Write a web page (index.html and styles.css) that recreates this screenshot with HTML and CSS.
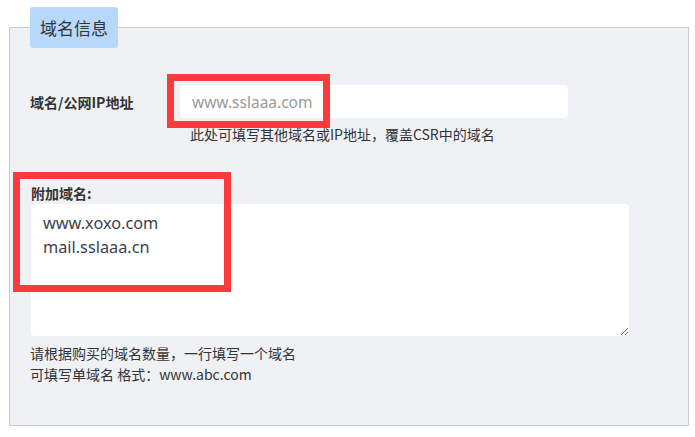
FILE: index.html
```html
<!DOCTYPE html>
<html lang="zh-CN">
<head>
<meta charset="utf-8">
<title>域名信息</title>
<link rel="stylesheet" href="styles.css">
</head>
<body>
<fieldset class="panel">
  <legend class="panel-title">域名信息</legend>
  <div class="panel-body">
    <div class="row">
      <label class="label" for="domain">域名/公网IP地址</label>
      <input class="input" id="domain" type="text" placeholder="www.sslaaa.com">
    </div>
    <div class="hint hint-indent">此处可填写其他域名或IP地址，覆盖CSR中的域名</div>
    <label class="label label-block" for="extra">附加域名:</label>
    <textarea class="textarea" id="extra">www.xoxo.com
mail.sslaaa.cn</textarea>
    <div class="hint hint-list">
      <div>请根据购买的域名数量，一行填写一个域名</div>
      <div>可填写单域名 格式：www.abc.com</div>
    </div>
  </div>
</fieldset>
<div class="mark mark-one"></div>
<div class="mark mark-two"></div>
</body>
</html>
```
FILE: styles.css
```css
html, body {
  margin: 0;
  padding: 0;
  background: #ffffff;
}
body {
  padding-top: 7px;
  font-family: "Noto Sans", "Noto Sans CJK SC", sans-serif;
  color: #333333;
}
.panel {
  margin: 0 6px 0 9px;
  padding: 0;
  border: 1px solid #c9cade;
  background: #f0f1f5;
  min-width: 0;
}
.panel-title {
  margin-left: 20px;
  padding: 0 10px;
  height: 41px;
  line-height: 41px;
  background: #b6d8fa;
  border-radius: 3px;
  font-family: "Noto Sans CJK SC", sans-serif;
  font-size: 17px;
  color: #333333;
}
.panel-body {
  padding: 37px 20px 40px 20px;
}
.row {
  display: flex;
  align-items: center;
}
.label {
  font-family: "Noto Sans CJK SC", sans-serif;
  font-weight: bold;
  font-size: 14px;
  color: #333333;
  width: 150px;
  flex: none;
}
.input {
  width: 388px;
  height: 33px;
  box-sizing: border-box;
  border: none;
  border-radius: 4px;
  background: #ffffff;
  padding: 0 12px;
  margin: 0;
  font-family: "Noto Sans", "Noto Sans CJK SC", sans-serif;
  font-size: 15.5px;
  color: #333;
  outline: none;
}
.input::placeholder {
  color: #9a9a9a;
}
.hint {
  font-family: "Noto Sans CJK SC", sans-serif;
  font-size: 14px;
  line-height: 20px;
  color: #333333;
}
.hint-indent {
  margin-top: 6px;
  padding-left: 160px;
}
.label-block {
  display: block;
  margin-top: 39px;
  line-height: 20px;
  padding-left: 1px;
}
.textarea {
  display: block;
  margin: 1px 0 0 1px;
  width: 598px;
  height: 132px;
  box-sizing: border-box;
  border: none;
  border-radius: 4px;
  background: #ffffff;
  padding: 7px 12px;
  font-family: "Noto Sans", "Noto Sans CJK SC", sans-serif;
  font-size: 16.3px;
  line-height: 24px;
  color: #3a4252;
  outline: none;
}
.hint-list {
  margin-top: 7px;
  line-height: 21px;
}
.mark {
  position: absolute;
  border: 7px solid #fb3a3b;
  box-sizing: border-box;
}
.mark-one {
  left: 167px;
  top: 74px;
  width: 163px;
  height: 54px;
}
.mark-two {
  left: 13px;
  top: 172px;
  width: 218px;
  height: 120px;
}
```
